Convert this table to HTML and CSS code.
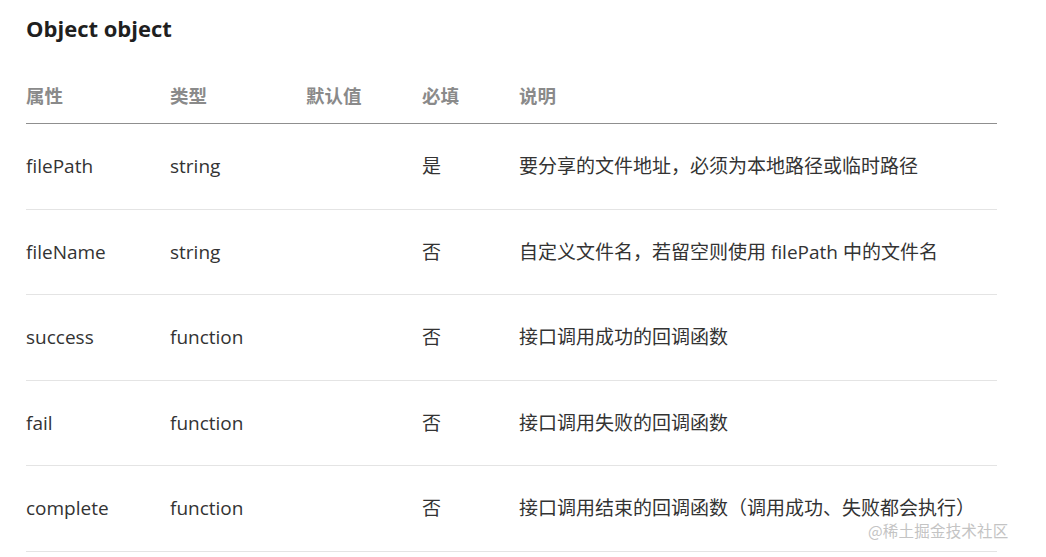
FILE: index.html
```html
<!DOCTYPE html>
<html lang="zh-CN">
<head>
<meta charset="utf-8">
<title>Object object</title>
<link rel="stylesheet" href="styles.css">
</head>
<body>
<main class="page">
  <h3 class="title">Object object</h3>
  <table class="params">
    <colgroup>
      <col class="c-name"><col class="c-type"><col class="c-default"><col class="c-req"><col class="c-desc">
    </colgroup>
    <thead>
      <tr><th>属性</th><th>类型</th><th>默认值</th><th>必填</th><th>说明</th></tr>
    </thead>
    <tbody>
      <tr><td>filePath</td><td>string</td><td></td><td>是</td><td>要分享的文件地址，必须为本地路径或临时路径</td></tr>
      <tr><td>fileName</td><td>string</td><td></td><td>否</td><td>自定义文件名，若留空则使用 filePath 中的文件名</td></tr>
      <tr><td>success</td><td>function</td><td></td><td>否</td><td>接口调用成功的回调函数</td></tr>
      <tr><td>fail</td><td>function</td><td></td><td>否</td><td>接口调用失败的回调函数</td></tr>
      <tr><td>complete</td><td>function</td><td></td><td>否</td><td>接口调用结束的回调函数（调用成功、失败都会执行）</td></tr>
    </tbody>
  </table>
  <div class="watermark">@稀土掘金技术社区</div>
</main>
</body>
</html>
```
FILE: styles.css
```css
html, body {
  margin: 0;
  padding: 0;
  background: #ffffff;
}
body {
  font-family: "Open Sans", "Noto Sans CJK SC", sans-serif;
  color: #333333;
}
.page {
  position: relative;
  padding: 12px 49px 0 26px;
  height: 557px;
  box-sizing: border-box;
  overflow: hidden;
}
.title {
  margin: 0;
  font-size: 22px;
  line-height: 32px;
  font-weight: 700;
  color: #1f1f1f;
}
.params {
  margin-top: 24px;
  width: 971px;
  border-collapse: collapse;
  table-layout: fixed;
}
.c-name { width: 144px; }
.c-type { width: 136px; }
.c-default { width: 116px; }
.c-req { width: 97px; }
.params th {
  text-align: left;
  font-size: 18.5px;
  font-weight: 700;
  color: #8a8a8a;
  padding: 0;
  height: 55px;
  vertical-align: middle;
  border-bottom: 1px solid #8f8f8f;
  line-height: 26px;
}
.params td {
  padding: 0;
  font-size: 19px;
  line-height: 26px;
  height: 84.5px;
  vertical-align: middle;
  border-bottom: 1px solid #e4e4e4;
  color: #333333;
  white-space: nowrap;
}
.watermark {
  position: absolute;
  left: 868px;
  top: 520px;
  font-size: 15.5px;
  line-height: 20px;
  color: #c4c4c4;
  font-family: "Noto Sans CJK SC", sans-serif;
  letter-spacing: 0.2px;
}
```
